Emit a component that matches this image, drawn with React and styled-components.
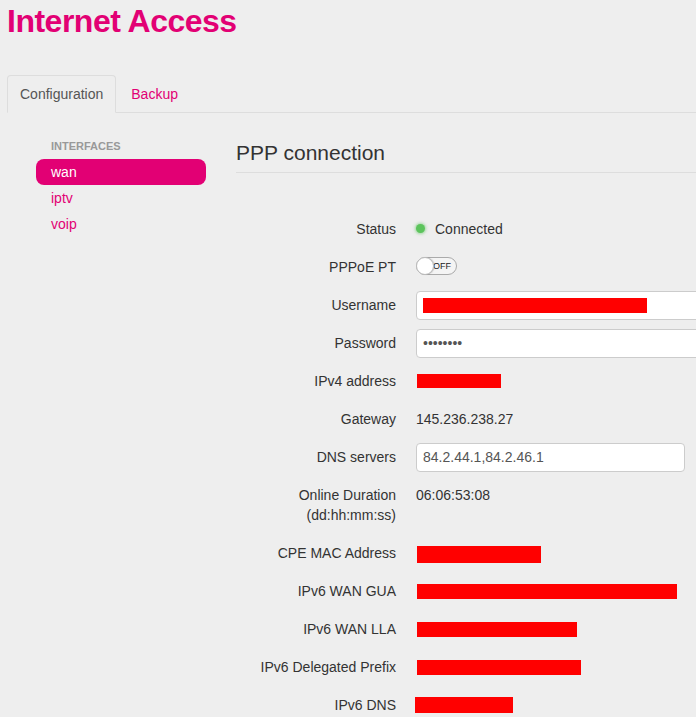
import React from "react";
import styled, { createGlobalStyle, css } from "styled-components";

const Global = createGlobalStyle`
  html, body { margin: 0; padding: 0; overflow: hidden; background: #eeeeee; }
  body { font-family: "Liberation Sans", Arial, sans-serif; font-size: 14px; color: #333; }
  * { box-sizing: border-box; }
`;

const Page = styled.div`
  padding-left: 7px;
  width: 696px;
  overflow: hidden;
`;

const Title = styled.h1`
  margin: 3px 0 0;
  font-size: 32px;
  line-height: 36px;
  font-weight: bold;
  letter-spacing: -0.5px;
  color: #e20074;
`;

const TabList = styled.ul`
  list-style: none;
  margin: 36px 0 0;
  padding: 0;
  display: flex;
  border-bottom: 1px solid #dddddd;
`;

const Tab = styled.li`
  margin-right: 2px;
  margin-bottom: -1px;
  padding: 8px 12px;
  line-height: 20px;
  font-size: 14px;
  border: 1px solid transparent;
  border-radius: 4px 4px 0 0;
  color: ${(p) => (p.$active ? "#555555" : "#e20074")};
  ${(p) =>
    p.$active &&
    css`
      border-color: #dddddd #dddddd transparent;
      background: #eeeeee;
    `}
`;

const Body = styled.div`
  display: flex;
  gap: 30px;
  padding-top: 25px;
`;

const Sidebar = styled.nav`
  width: 170px;
  margin-left: 29px;
  flex: none;
`;

const SectionLabel = styled.div`
  font-size: 11px;
  font-weight: bold;
  line-height: 16px;
  color: #999999;
  padding-left: 15px;
  margin-bottom: 5px;
  text-transform: uppercase;
`;

const NavItem = styled.div`
  height: 26px;
  line-height: 26px;
  padding: 0 15px;
  border-radius: 8px;
  font-size: 14px;
  color: ${(p) => (p.$active ? "#ffffff" : "#e20074")};
  background: ${(p) => (p.$active ? "#e20074" : "transparent")};
`;

const Main = styled.main`
  flex: 1;
  min-width: 0;
  overflow: hidden;
`;

const Heading = styled.h2`
  margin: 0 0 37px;
  font-size: 21px;
  font-weight: normal;
  line-height: 30px;
  padding-bottom: 4px;
  color: #333333;
  border-bottom: 1px solid #dddddd;
`;

const Row = styled.div`
  display: grid;
  grid-template-columns: 160px 1fr;
  column-gap: 20px;
  align-items: start;
`;

const Label = styled.div`
  text-align: right;
  padding: 9px 0;
  line-height: 20px;
  color: #333333;
`;

const Value = styled.div`
  min-height: 38px;
  display: flex;
  align-items: center;
  line-height: 20px;
  color: #333333;
  white-space: nowrap;
`;

const Dot = styled.span`
  width: 9px;
  height: 9px;
  border-radius: 50%;
  background: #5cc45c;
  box-shadow: 0 0 3px 1px rgba(92, 196, 92, 0.55);
  margin: 0 10px 1px 0;
  flex: none;
`;

const Toggle = styled.span`
  position: relative;
  width: 41px;
  height: 18px;
  border: 1px solid #aaaaaa;
  border-radius: 9px;
  background: #f4f4f4;
  display: inline-flex;
  align-items: center;
  justify-content: flex-end;
  padding-right: 5px;
  margin-top: -2px;
`;

const Knob = styled.span`
  position: absolute;
  left: -1px;
  top: -1px;
  width: 18px;
  height: 18px;
  border-radius: 50%;
  background: #ffffff;
  border: 1px solid #bbbbbb;
  box-shadow: 1px 0 1px rgba(0, 0, 0, 0.15);
`;

const ToggleText = styled.span`
  font-size: 9px;
  line-height: 10px;
  color: #222;
`;

const fieldStyle = css`
  height: 29px;
  width: ${(p) => p.$width}px;
  border: 1px solid #cccccc;
  border-radius: 4px;
  background: #ffffff;
  padding: 0 6px;
  font-family: "Liberation Sans", Arial, sans-serif;
  font-size: 14px;
  color: #555555;
  outline: none;
`;

const FieldBox = styled.div`
  ${fieldStyle}
  display: flex;
  align-items: center;
  flex: none;
`;

const Input = styled.input`
  ${fieldStyle}
  flex: none;
`;

const Redact = styled.span`
  display: inline-block;
  background: #ff0000;
  width: ${(p) => p.$w}px;
  height: ${(p) => p.$h}px;
  margin-left: ${(p) => p.$x || 0}px;
  margin-top: ${(p) => p.$y || 0}px;
  flex: none;
`;

export default function App() {
  return (
    <Page>
      <Global />
      <Title>Internet Access</Title>
      <TabList>
        <Tab $active>Configuration</Tab>
        <Tab>Backup</Tab>
      </TabList>
      <Body>
        <Sidebar>
          <SectionLabel>Interfaces</SectionLabel>
          <NavItem $active>wan</NavItem>
          <NavItem>iptv</NavItem>
          <NavItem>voip</NavItem>
        </Sidebar>
        <Main>
          <Heading>PPP connection</Heading>
          <Row>
            <Label>Status</Label>
            <Value>
              <Dot />
              Connected
            </Value>
          </Row>
          <Row>
            <Label>PPPoE PT</Label>
            <Value>
              <Toggle>
                <Knob />
                <ToggleText>OFF</ToggleText>
              </Toggle>
            </Value>
          </Row>
          <Row>
            <Label>Username</Label>
            <Value>
              <FieldBox $width={420}>
                <Redact $w={224} $h={15} />
              </FieldBox>
            </Value>
          </Row>
          <Row>
            <Label>Password</Label>
            <Value>
              <Input $width={420} type="password" readOnly value="password" />
            </Value>
          </Row>
          <Row>
            <Label>IPv4 address</Label>
            <Value>
              <Redact $w={84} $h={14} $x={1} $y={-1} />
            </Value>
          </Row>
          <Row>
            <Label>Gateway</Label>
            <Value>145.236.238.27</Value>
          </Row>
          <Row>
            <Label>DNS servers</Label>
            <Value>
              <Input $width={269} type="text" readOnly value="84.2.44.1,84.2.46.1" />
            </Value>
          </Row>
          <Row>
            <Label>
              Online Duration
              <br />
              (dd:hh:mm:ss)
            </Label>
            <Value>06:06:53:08</Value>
          </Row>
          <Row>
            <Label>CPE MAC Address</Label>
            <Value>
              <Redact $w={124} $h={17} $x={1} $y={3} />
            </Value>
          </Row>
          <Row>
            <Label>IPv6 WAN GUA</Label>
            <Value>
              <Redact $w={260} $h={15} $x={1} />
            </Value>
          </Row>
          <Row>
            <Label>IPv6 WAN LLA</Label>
            <Value>
              <Redact $w={160} $h={15} $x={1} />
            </Value>
          </Row>
          <Row>
            <Label>IPv6 Delegated Prefix</Label>
            <Value>
              <Redact $w={164} $h={15} $x={1} $y={1} />
            </Value>
          </Row>
          <Row>
            <Label>IPv6 DNS</Label>
            <Value>
              <Redact $w={98} $h={16} $x={-1} $y={-1} />
            </Value>
          </Row>
        </Main>
      </Body>
    </Page>
  );
}
